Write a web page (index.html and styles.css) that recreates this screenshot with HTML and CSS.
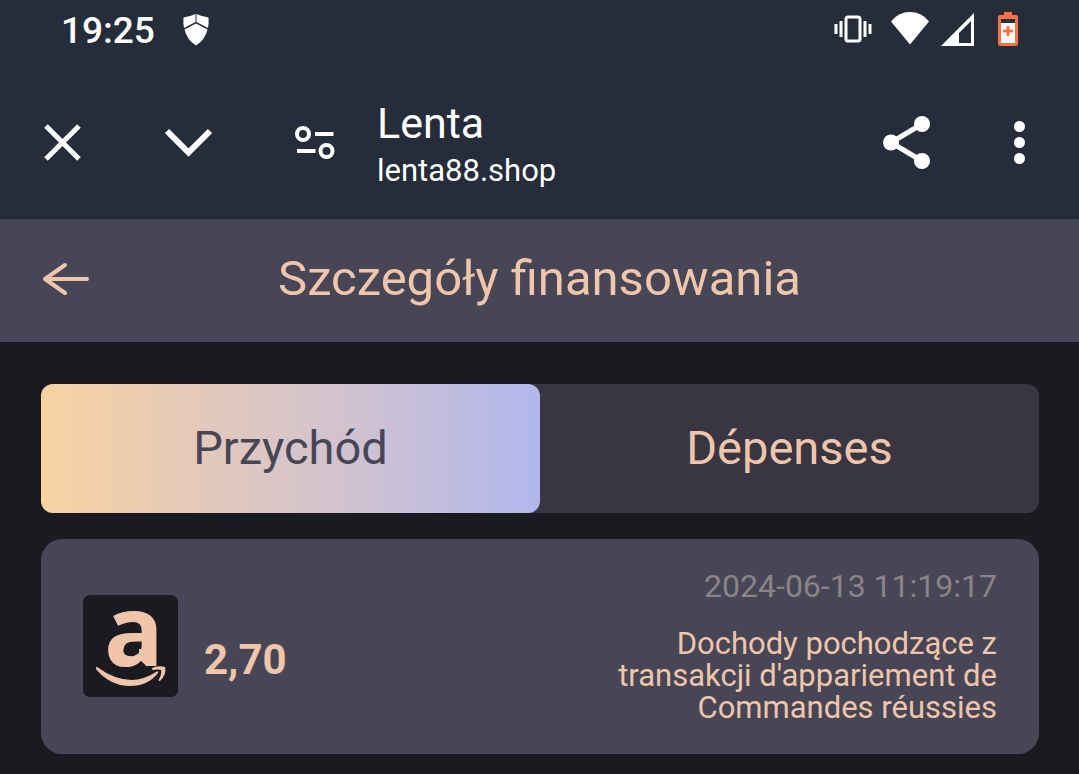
FILE: index.html
```html
<!DOCTYPE html>
<html lang="pl">
<head>
<meta charset="utf-8">
<meta name="viewport" content="width=device-width, initial-scale=1">
<title>Lenta</title>
<link rel="stylesheet" href="styles.css">
</head>
<body>
<div class="status-bar">
  <div class="status-group">
    <span class="clock">19:25</span>
    <svg class="shield" width="26" height="32" viewBox="0 0 26 32" aria-hidden="true">
      <path fill="#fff" d="M12.500 0v8L1 14Q0 9 .5 3.500Q6 3 12.500 0zM13.500 0v8L25 14q1-5 .5-10.500Q20 3 13.500 0zM13 9.500l11.500 6Q22 26 13 31.500Q4 26 1.500 15.500z"/>
    </svg>
  </div>
  <div class="status-group status-icons">
    <svg width="38" height="28" viewBox="0 0 38 28" aria-hidden="true">
      <rect x="12" y="2" width="14" height="24" rx="2" fill="none" stroke="#fff" stroke-width="3"/>
      <path stroke="#fff" stroke-width="3" d="M2 9v10M7 6v16M31 6v16M36 9v10"/>
    </svg>
    <svg class="wifi" width="40" height="34" viewBox="0 0 40 34" aria-hidden="true">
      <path fill="#fff" d="M1 9.500Q8 0 20 0t19 9.500L20 32.500z"/>
    </svg>
    <svg class="signal" width="33" height="33" viewBox="0 0 33 33" aria-hidden="true">
      <path fill="#fff" fill-rule="evenodd" d="M33 0v33H0zM30 8L18 20v10h12z"/>
    </svg>
    <svg class="battery" width="20" height="34" viewBox="0 0 20 34" aria-hidden="true">
      <path fill="#ff7043" d="M6 0h8v3h4q2 0 2 2v27q0 2-2 2H2q-2 0-2-2V5q0-2 2-2h4z"/>
      <path fill="#252c3a" d="M3 7h14v4H3z"/>
      <path fill="#fff" d="M3 11h14v20H3z"/>
      <path stroke="#ff7043" stroke-width="3" d="M5 19h10M10 14v10"/>
    </svg>
  </div>
</div>

<header class="browser-bar">
  <button class="icon-button" type="button" aria-label="Zamknij">
    <svg width="38" height="38" viewBox="0 0 38 38"><path fill="none" stroke="#fff" stroke-width="5" d="M2 2l33 33M35 2L2 35"/></svg>
  </button>
  <button class="icon-button collapse" type="button" aria-label="Minimalizuj">
    <svg width="48" height="38" viewBox="0 0 48 38"><path fill="none" stroke="#fff" stroke-width="6" d="M2 7l21.500 21.500L45 7"/></svg>
  </button>
  <button class="icon-button site-settings" type="button" aria-label="Ustawienia witryny">
    <svg width="40" height="34" viewBox="0 0 40 34"><g fill="none" stroke="#fff" stroke-width="4"><circle cx="8" cy="8" r="6"/><circle cx="31.500" cy="25" r="6"/><path d="M20 8h18.500M2 25h18.500"/></g></svg>
  </button>
  <div class="site">
    <div class="site-name">Lenta</div>
    <div class="site-host">lenta88.shop</div>
  </div>
  <button class="icon-button" type="button" aria-label="Udostępnij">
    <svg width="48" height="54" viewBox="0 0 48 54"><path fill="none" stroke="#fff" stroke-width="5" d="M39 8L8 26.500 39 45"/><g fill="#fff"><circle cx="39" cy="8" r="8"/><circle cx="8" cy="26.500" r="8"/><circle cx="39" cy="45" r="8"/></g></svg>
  </button>
  <button class="icon-button menu" type="button" aria-label="Menu">
    <svg width="12" height="44" viewBox="0 0 12 44"><g fill="#fff"><circle cx="5.500" cy="5.500" r="5.500"/><circle cx="5.500" cy="21.500" r="5.500"/><circle cx="5.500" cy="37.500" r="5.500"/></g></svg>
  </button>
</header>

<div class="page-header">
  <a class="back" href="#" aria-label="Wstecz">
    <svg width="48" height="34" viewBox="0 0 48 34"><path fill="none" stroke="#f0c5aa" stroke-width="4" stroke-linecap="round" stroke-linejoin="round" d="M45 17H3M23 3L3 17l20 14"/></svg>
  </a>
  <h1 class="page-title">Szczegóły finansowania</h1>
</div>

<main class="content">
  <div class="tabs">
    <button class="tab tab-active" type="button">Przychód</button>
    <button class="tab" type="button">Dépenses</button>
  </div>
  <article class="entry">
    <svg class="shop-logo" width="95" height="102" viewBox="0 0 95 102" role="img" aria-label="Amazon">
      <rect width="95" height="102" rx="7" fill="#1a1b20"/>
      <text class="logo-letter" x="21" y="71">a</text>
      <path fill="#f0c5aa" d="M56 64V54h12l4 8.500-8 9z"/>
      <path fill="#f0c5aa" d="M14 72Q46 95 73 77Q76 75 75 78Q65 91 47 91Q27 91 13 74Q13 71 14 72z"/>
      <path fill="#f0c5aa" d="M69 73Q75 70 82 72Q84 79 77 86Q75 86 76 84Q79 79 78 75Q75 74 70 75Q68 74 69 73z"/>
    </svg>
    <div class="amount">2,70</div>
    <div class="details">
      <time class="date" datetime="2024-06-13T11:19:17">2024-06-13 11:19:17</time>
      <p class="description">Dochody pochodzące z transakcji d'appariement de Commandes réussies</p>
    </div>
  </article>
</main>
</body>
</html>
```
FILE: styles.css
```css
* {
  box-sizing: border-box;
}

body {
  margin: 0;
  min-height: 100vh;
  background: #1a1b20;
  color: #f0c5aa;
  font-family: Roboto, "Liberation Sans", sans-serif;
}

button {
  border: 0;
  padding: 0;
  background: none;
  font-family: inherit;
  cursor: pointer;
}

svg {
  display: block;
  flex: none;
}

.status-bar {
  display: flex;
  justify-content: space-between;
  align-items: center;
  height: 60px;
  padding: 0 61px;
  background: #252c3a;
  color: #fff;
}

.status-group {
  display: flex;
  align-items: center;
}

.status-icons {
  padding-bottom: 2px;
}

.clock {
  font-size: 37px;
  font-weight: 500;
}

.shield {
  margin-left: 28px;
}

.wifi {
  margin-left: 18px;
}

.signal {
  margin-left: 11px;
}

.battery {
  margin-left: 24px;
}

.browser-bar {
  display: flex;
  align-items: center;
  height: 159px;
  padding: 10px 53px 0 44px;
  border-bottom: 3px solid #222935;
  background: #252c3a;
  color: #fff;
}

.collapse {
  margin-left: 83px;
}

.site-settings {
  margin-left: 82px;
}

.site {
  flex: 1;
  margin-left: 42px;
  padding-top: 8px;
}

.site-name {
  font-size: 43px;
  line-height: 48px;
}

.site-host {
  font-size: 31px;
  line-height: 48px;
}

.menu {
  margin-left: 83px;
}

.page-header {
  display: grid;
  grid-template-columns: 60px 1fr 60px;
  align-items: center;
  height: 123px;
  padding: 0 42px 4px;
  background: #474656;
}

.page-title {
  margin: 0;
  font-size: 49px;
  font-weight: 400;
  text-align: center;
}

.content {
  display: grid;
  gap: 26px;
  padding: 42px 40px 20px 41px;
}

.tabs {
  display: grid;
  grid-template-columns: 1fr 1fr;
  border-radius: 12px;
  background: #373642;
}

.tab {
  height: 129px;
  padding-bottom: 3px;
  border-radius: 12px;
  color: #f0c5aa;
  font-size: 47px;
}

.tab-active {
  background: linear-gradient(90deg, #f8d2a2, #e3c9bb 33%, #d0c2d0 62%, #b1b7ed);
  color: #474656;
}

.entry {
  display: flex;
  align-items: center;
  min-height: 215px;
  padding: 26px 42px 28px;
  border-radius: 21px;
  background: #474656;
}

.shop-logo {
  overflow: visible;
}

.logo-letter {
  fill: #f0c5aa;
  font-family: "Open Sans", sans-serif;
  font-size: 99px;
  font-weight: 700;
}

.amount {
  margin: 28px 0 0 26px;
  font-size: 42px;
  font-weight: 700;
}

.details {
  max-width: 400px;
  margin-left: auto;
  text-align: right;
}

.date {
  display: block;
  color: #8c8389;
  font-size: 32px;
  line-height: 36px;
}

.description {
  margin: 24px 0 0;
  font-size: 31px;
  line-height: 32px;
}
```
